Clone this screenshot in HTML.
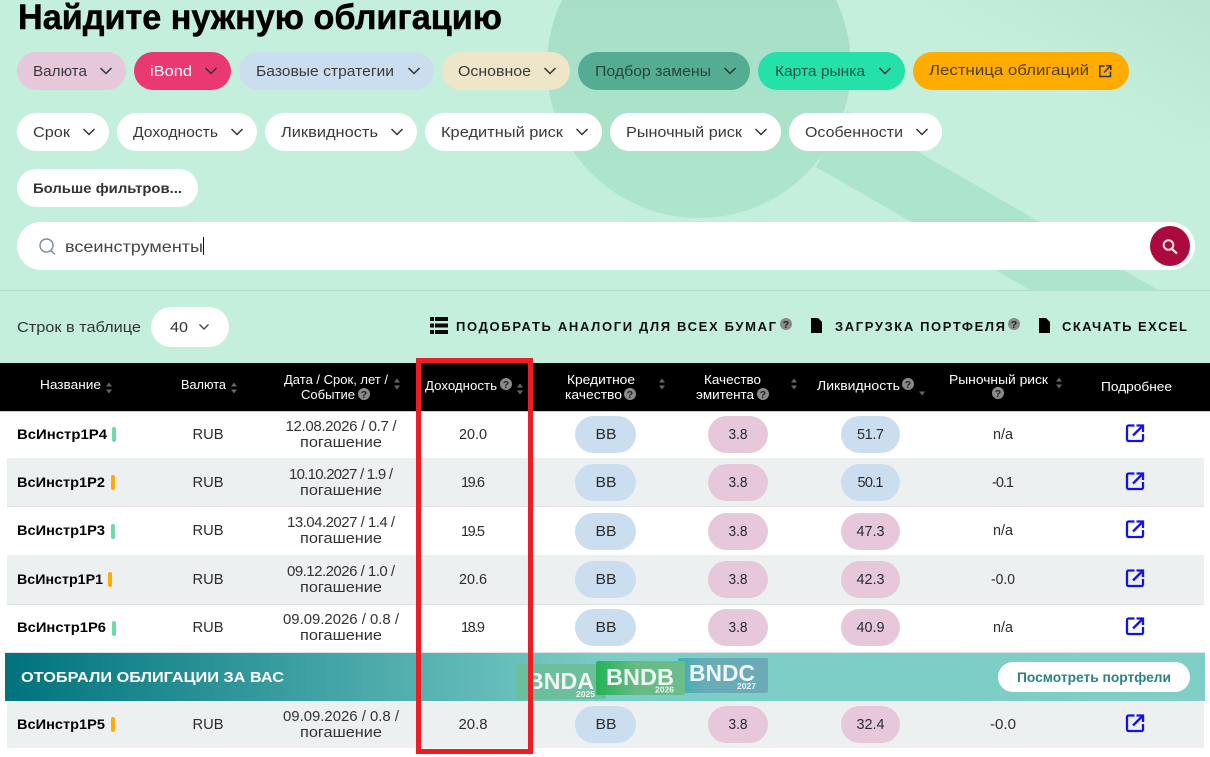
<!DOCTYPE html>
<html lang="ru"><head><meta charset="utf-8"><title>Облигации</title>
<style>
html,body{margin:0;padding:0;background:#fff;width:1210px;height:757px;overflow:hidden}
svg{display:block}
text{font-family:"Liberation Sans","Noto Sans CJK SC",sans-serif;font-size:14.5px;fill:#3a3a3a}
.p{font-size:15px}
.w{fill:#fff;font-size:13px}
.m{text-anchor:middle;font-size:14.5px;fill:#2b2b2b}
.n{font-size:14px;font-weight:bold;fill:#000}
.d{font-size:15px;fill:#333;text-anchor:middle}
.a{font-size:13px;font-weight:bold;fill:#111}
.q{font-size:10.5px;font-weight:bold;fill:#222;text-anchor:middle}
.b{font-weight:bold;fill:#f1f5f3}
</style></head><body>
<svg width="1210" height="757" viewBox="0 0 1210 757" xmlns="http://www.w3.org/2000/svg">
<defs>
<path id="c" d="M-5.5 -3L0 2.5L5.5 -3" fill="none" stroke="#333" stroke-width="1.5"/>
<g id="s"><path d="M-3 -1.5L0 -5.500L3 -1.5Z" fill="#666"/><path d="M-3 1.5L0 5.500L3 1.5Z" fill="#666"/></g>
<g id="h"><circle r="6" fill="#8a8a8a"/></g>
<path id="e" d="M8.5 1.5H2.5a1.500 1.500 0 0 0-1.500 1.500V15.500a1.500 1.500 0 0 0 1.500 1.500H15.500a1.500 1.500 0 0 0 1.500-1.500V10M7 11.500L16.500 2M10.500 1.500H17V8" fill="none" stroke="#1212f0" stroke-width="2.300"/>
<path id="f" d="M0 0H7L11 4V15H0Z" fill="#000"/>
<linearGradient id="bn" x1="0" x2="1"><stop offset="0" stop-color="#00737e"/><stop offset=".5" stop-color="#7bcdc6"/><stop offset="1" stop-color="#7fcfc8"/></linearGradient>
<linearGradient id="tr" gradientUnits="userSpaceOnUse" x1="1210" y1="0" x2="1140" y2="130"><stop offset="0" stop-color="#b9e5d2"/><stop offset="1" stop-color="#c3efdc"/></linearGradient>
<linearGradient id="top" x1="0" x2="0" y1="0" y2="1"><stop offset="0" stop-color="#a5dcc5"/><stop offset="1" stop-color="#aee5cd"/></linearGradient>
<linearGradient id="bb" x1="0" x2="1"><stop offset="0" stop-color="#25b258"/><stop offset=".45" stop-color="#65bb84"/><stop offset="1" stop-color="#6cbd8c"/></linearGradient>
<linearGradient id="bc" x1="0" x2="1"><stop offset="0" stop-color="#3eaeb2"/><stop offset=".3" stop-color="#69acb9"/><stop offset="1" stop-color="#6caab7"/></linearGradient>
</defs>

<rect width="1210" height="363" fill="#c3efdc"/>
<rect width="1210" height="150" fill="url(#tr)"/>
<circle cx="699" cy="66" r="152" fill="url(#top)"/>
<path d="M816 167L1030 290H1158L847 111Z" fill="#ade5cc"/>
<rect y="290" width="1210" height="1" fill="#b3dfca"/>

<text x="18" y="29" textLength="484" lengthAdjust="spacingAndGlyphs" stroke="#000" stroke-width=".5" style="font-size:35px;font-weight:bold;fill:#000">Найдите нужную облигацию</text>

<rect x="17" y="52" width="109" height="38" rx="19" fill="#e7c8da"/>
<text class="p" x="33" y="76" textLength="54" lengthAdjust="spacingAndGlyphs">Валюта</text><use href="#c" x="106" y="71"/>
<rect x="134" y="52" width="97" height="38" rx="19" fill="#ea3872"/>
<text class="p" x="150" y="76" textLength="42" lengthAdjust="spacingAndGlyphs" style="fill:#fff">iBond</text><use href="#c" x="211" y="71"/>
<rect x="239" y="52" width="195" height="38" rx="19" fill="#cbdef0"/>
<text class="p" x="256" y="76" textLength="138" lengthAdjust="spacingAndGlyphs">Базовые стратегии</text><use href="#c" x="414" y="71"/>
<rect x="442" y="52" width="128" height="38" rx="19" fill="#efe5c9"/>
<text class="p" x="458" y="76" textLength="73" lengthAdjust="spacingAndGlyphs">Основное</text><use href="#c" x="550" y="71"/>
<rect x="578" y="52" width="172" height="38" rx="19" fill="#54ac93"/>
<text class="p" x="595" y="76" textLength="116" lengthAdjust="spacingAndGlyphs" style="fill:#28453c">Подбор замены</text><use href="#c" x="730" y="71"/>
<rect x="758" y="52" width="147" height="38" rx="19" fill="#24e0a9"/>
<text class="p" x="775" y="76" textLength="90" lengthAdjust="spacingAndGlyphs" style="fill:#1d5548">Карта рынка</text><use href="#c" x="885" y="71"/>
<rect x="913" y="52" width="216" height="38" rx="19" fill="#ffab00"/>
<text class="p" x="929" y="75" textLength="160" lengthAdjust="spacingAndGlyphs" style="fill:#4f3f10">Лестница облигаций</text>
<path d="M1104.500 66H1099.800V76.500H1110.500V71.500M1104 72.500L1110 66.500M1106 65.800H1110.800V70" fill="none" stroke="#333" stroke-width="1.500"/>

<rect x="17" y="113" width="92" height="38" rx="19" fill="#fff"/>
<text class="p" x="33" y="137" textLength="37" lengthAdjust="spacingAndGlyphs">Срок</text><use href="#c" x="89" y="132"/>
<rect x="117" y="113" width="140" height="38" rx="19" fill="#fff"/>
<text class="p" x="133" y="137" textLength="85" lengthAdjust="spacingAndGlyphs">Доходность</text><use href="#c" x="237" y="132"/>
<rect x="265" y="113" width="152" height="38" rx="19" fill="#fff"/>
<text class="p" x="281" y="137" textLength="97" lengthAdjust="spacingAndGlyphs">Ликвидность</text><use href="#c" x="397" y="132"/>
<rect x="425" y="113" width="177" height="38" rx="19" fill="#fff"/>
<text class="p" x="441" y="137" textLength="122" lengthAdjust="spacingAndGlyphs">Кредитный риск</text><use href="#c" x="582" y="132"/>
<rect x="610" y="113" width="171" height="38" rx="19" fill="#fff"/>
<text class="p" x="626" y="137" textLength="116" lengthAdjust="spacingAndGlyphs">Рыночный риск</text><use href="#c" x="761" y="132"/>
<rect x="789" y="113" width="153" height="38" rx="19" fill="#fff"/>
<text class="p" x="805" y="137" textLength="98" lengthAdjust="spacingAndGlyphs">Особенности</text><use href="#c" x="922" y="132"/>
<rect x="17" y="169" width="181" height="38" rx="19" fill="#fff"/>
<text x="33" y="193" textLength="149" lengthAdjust="spacingAndGlyphs" style="font-weight:bold;font-size:14px;fill:#333">Больше фильтров...</text>

<rect x="17" y="222" width="1178" height="48" rx="24" fill="#fff"/>
<circle cx="46.500" cy="245.500" r="6.500" fill="none" stroke="#7e8a92" stroke-width="1.400"/>
<path d="M51 250.500L55 254.500" stroke="#7e8a92" stroke-width="1.400"/>
<text x="65" y="252" textLength="138" lengthAdjust="spacingAndGlyphs" style="font-size:16px;fill:#444">всеинструменты</text>
<rect x="203" y="237" width="1" height="18" fill="#111"/>
<circle cx="1170" cy="246" r="20" fill="#ac0a3f"/>
<circle cx="1168.500" cy="245" r="4.800" fill="none" stroke="#f5e0e6" stroke-width="2"/>
<path d="M1172 249L1177 253.500" stroke="#f5e0e6" stroke-width="2.200"/>

<text x="17" y="332" textLength="124" lengthAdjust="spacingAndGlyphs" style="font-size:15px;fill:#333">Строк в таблице</text>
<rect x="151" y="307" width="78" height="40" rx="20" fill="#fff"/>
<text x="170" y="332" textLength="18" lengthAdjust="spacingAndGlyphs" style="font-size:15px;fill:#333">40</text>
<path d="M199.500 324.500L204 329L208.500 324.500" fill="none" stroke="#444" stroke-width="1.400"/>

<path d="M430 317h4v4h-4zM435 317h13v4h-13zM430 323.500h4v4h-4zM435 323.500h13v4h-13zM430 330h4v4h-4zM435 330h13v4h-13z" fill="#0a0a0a"/>
<text class="a" x="456" y="331" textLength="320">ПОДОБРАТЬ АНАЛОГИ ДЛЯ ВСЕХ БУМАГ</text>
<use href="#h" x="786" y="324"/><text class="q" x="786" y="327.800">?</text>
<use href="#f" x="811" y="318"/>
<text class="a" x="835" y="331" textLength="170">ЗАГРУЗКА ПОРТФЕЛЯ</text>
<use href="#h" x="1014" y="324"/><text class="q" x="1014" y="327.800">?</text>
<use href="#f" x="1039" y="318"/>
<text class="a" x="1062" y="331" textLength="125">СКАЧАТЬ EXCEL</text>

<rect y="363" width="1210" height="48" fill="#000"/>
<text class="w" x="40" y="389" textLength="61" lengthAdjust="spacingAndGlyphs">Название</text><use href="#s" x="109" y="388"/>
<text class="w" x="181" y="389" textLength="45" lengthAdjust="spacingAndGlyphs">Валюта</text><use href="#s" x="234" y="388"/>
<text class="w" x="284" y="384" textLength="104" lengthAdjust="spacingAndGlyphs">Дата / Срок, лет /</text>
<text class="w" x="301" y="399" textLength="54" lengthAdjust="spacingAndGlyphs">Событие</text><use href="#h" x="364" y="394"/><text class="q" x="364" y="397.800">?</text><use href="#s" x="397" y="384"/>
<text class="w" x="425" y="390" textLength="72" lengthAdjust="spacingAndGlyphs">Доходность</text><use href="#h" x="506" y="384"/><text class="q" x="506" y="387.800">?</text><use href="#s" x="520" y="389"/>
<text class="w" x="567" y="384" textLength="68" lengthAdjust="spacingAndGlyphs">Кредитное</text>
<text class="w" x="565" y="399" textLength="57" lengthAdjust="spacingAndGlyphs">качество</text><use href="#h" x="630" y="394"/><text class="q" x="630" y="397.800">?</text><use href="#s" x="662" y="384"/>
<text class="w" x="704" y="384" textLength="57" lengthAdjust="spacingAndGlyphs">Качество</text>
<text class="w" x="696" y="399" textLength="58" lengthAdjust="spacingAndGlyphs">эмитента</text><use href="#h" x="763" y="394"/><text class="q" x="763" y="397.800">?</text><use href="#s" x="794" y="384"/>
<text class="w" x="817" y="390" textLength="83" lengthAdjust="spacingAndGlyphs">Ликвидность</text><use href="#h" x="908" y="384"/><text class="q" x="908" y="387.800">?</text>
<path d="M919 391.500L922 395.500L925 391.500Z" fill="#666"/>
<text class="w" x="949" y="384" textLength="99" lengthAdjust="spacingAndGlyphs">Рыночный риск</text><use href="#s" x="1059" y="383"/>
<use href="#h" x="998" y="393"/><text class="q" x="998" y="396.800">?</text>
<text class="w" x="1101" y="391" textLength="71" lengthAdjust="spacingAndGlyphs">Подробнее</text>

<rect y="411" width="1210" height="346" fill="#fff"/>
<rect y="411" width="1210" height="1" fill="#ccc"/>
<rect x="7" y="458" width="1197" height="48" fill="#edf0f1"/><rect x="7" y="506" width="1197" height="1" fill="#dfe3e4"/>
<rect x="7" y="555" width="1197" height="49" fill="#edf0f1"/><rect x="7" y="604" width="1197" height="1" fill="#dfe3e4"/>
<rect x="5" y="652" width="1200" height="1" fill="#dfe3e4"/>
<rect x="7" y="701" width="1197" height="47" fill="#edf0f1"/>

<!-- row 1 -->
<text class="n" x="17" y="439" textLength="90" lengthAdjust="spacingAndGlyphs">ВсИнстр1Р4</text><rect x="112" y="427" width="4" height="15" rx="2" fill="#6ddba6"/>
<text class="m" x="208" y="439" textLength="31" lengthAdjust="spacingAndGlyphs">RUB</text>
<text class="d" x="341" y="431" textLength="111">12.08.2026 / 0.7 /</text><text class="d" x="341" y="447" textLength="82" lengthAdjust="spacingAndGlyphs">погашение</text>
<text class="m" x="473" y="439" textLength="28" lengthAdjust="spacingAndGlyphs">20.0</text>
<rect x="575" y="416" width="61" height="37" rx="18.500" fill="#cbdef0"/><text class="m" x="606" y="439" textLength="21" lengthAdjust="spacingAndGlyphs">BB</text>
<rect x="708" y="416" width="60" height="37" rx="18.500" fill="#e7c8da"/><text class="m" x="738" y="439" textLength="19" lengthAdjust="spacingAndGlyphs">3.8</text>
<rect x="841" y="416" width="59" height="37" rx="18.500" fill="#cbdef0"/><text class="m" x="870.500" y="439" textLength="27">51.7</text>
<text class="m" x="1003" y="439" textLength="20" lengthAdjust="spacingAndGlyphs">n/a</text>
<use href="#e" x="1126" y="424"/>

<!-- row 2 -->
<text class="n" x="17" y="487" textLength="88" lengthAdjust="spacingAndGlyphs">ВсИнстр1Р2</text><rect x="111" y="475" width="4" height="15" rx="2" fill="#ffab00"/>
<text class="m" x="208" y="487" textLength="31" lengthAdjust="spacingAndGlyphs">RUB</text>
<text class="d" x="341" y="479" textLength="104">10.10.2027 / 1.9 /</text><text class="d" x="341" y="495" textLength="82" lengthAdjust="spacingAndGlyphs">погашение</text>
<text class="m" x="473" y="487" textLength="24">19.6</text>
<rect x="575" y="464" width="61" height="37" rx="18.500" fill="#cbdef0"/><text class="m" x="606" y="487" textLength="21" lengthAdjust="spacingAndGlyphs">BB</text>
<rect x="708" y="464" width="60" height="37" rx="18.500" fill="#e7c8da"/><text class="m" x="738" y="487" textLength="19" lengthAdjust="spacingAndGlyphs">3.8</text>
<rect x="841" y="464" width="59" height="37" rx="18.500" fill="#cbdef0"/><text class="m" x="870.500" y="487" textLength="26">50.1</text>
<text class="m" x="1003" y="487" textLength="22">-0.1</text>
<use href="#e" x="1126" y="472"/>

<!-- row 3 -->
<text class="n" x="17" y="535" textLength="88" lengthAdjust="spacingAndGlyphs">ВсИнстр1Р3</text><rect x="111" y="524" width="4" height="15" rx="2" fill="#6ddba6"/>
<text class="m" x="208" y="535" textLength="31" lengthAdjust="spacingAndGlyphs">RUB</text>
<text class="d" x="341" y="527" textLength="108">13.04.2027 / 1.4 /</text><text class="d" x="341" y="543" textLength="82" lengthAdjust="spacingAndGlyphs">погашение</text>
<text class="m" x="473" y="536" textLength="24">19.5</text>
<rect x="575" y="513" width="61" height="37" rx="18.500" fill="#cbdef0"/><text class="m" x="606" y="536" textLength="21" lengthAdjust="spacingAndGlyphs">BB</text>
<rect x="708" y="513" width="60" height="37" rx="18.500" fill="#e7c8da"/><text class="m" x="738" y="536" textLength="19" lengthAdjust="spacingAndGlyphs">3.8</text>
<rect x="841" y="513" width="59" height="37" rx="18.500" fill="#e7c8da"/><text class="m" x="870.500" y="536" textLength="28" lengthAdjust="spacingAndGlyphs">47.3</text>
<text class="m" x="1003" y="535" textLength="20" lengthAdjust="spacingAndGlyphs">n/a</text>
<use href="#e" x="1126" y="520"/>

<!-- row 4 -->
<text class="n" x="17" y="584" textLength="86" lengthAdjust="spacingAndGlyphs">ВсИнстр1Р1</text><rect x="108" y="572" width="4" height="15" rx="2" fill="#ffab00"/>
<text class="m" x="208" y="584" textLength="31" lengthAdjust="spacingAndGlyphs">RUB</text>
<text class="d" x="341" y="576" textLength="108">09.12.2026 / 1.0 /</text><text class="d" x="341" y="592" textLength="82" lengthAdjust="spacingAndGlyphs">погашение</text>
<text class="m" x="473" y="584" textLength="28" lengthAdjust="spacingAndGlyphs">20.6</text>
<rect x="575" y="561" width="61" height="37" rx="18.500" fill="#cbdef0"/><text class="m" x="606" y="584" textLength="21" lengthAdjust="spacingAndGlyphs">BB</text>
<rect x="708" y="561" width="60" height="37" rx="18.500" fill="#e7c8da"/><text class="m" x="738" y="584" textLength="19" lengthAdjust="spacingAndGlyphs">3.8</text>
<rect x="841" y="561" width="59" height="37" rx="18.500" fill="#e7c8da"/><text class="m" x="870.500" y="584" textLength="28" lengthAdjust="spacingAndGlyphs">42.3</text>
<text class="m" x="1003" y="584" textLength="24" lengthAdjust="spacingAndGlyphs">-0.0</text>
<use href="#e" x="1126" y="569"/>

<!-- row 5 -->
<text class="n" x="17" y="632" textLength="89" lengthAdjust="spacingAndGlyphs">ВсИнстр1Р6</text><rect x="112" y="621" width="4" height="15" rx="2" fill="#6ddba6"/>
<text class="m" x="208" y="632" textLength="31" lengthAdjust="spacingAndGlyphs">RUB</text>
<text class="d" x="341" y="624" textLength="116" lengthAdjust="spacingAndGlyphs">09.09.2026 / 0.8 /</text><text class="d" x="341" y="640" textLength="82" lengthAdjust="spacingAndGlyphs">погашение</text>
<text class="m" x="473" y="632" textLength="24">18.9</text>
<rect x="575" y="609" width="61" height="37" rx="18.500" fill="#cbdef0"/><text class="m" x="606" y="632" textLength="21" lengthAdjust="spacingAndGlyphs">BB</text>
<rect x="708" y="609" width="60" height="37" rx="18.500" fill="#e7c8da"/><text class="m" x="738" y="632" textLength="19" lengthAdjust="spacingAndGlyphs">3.8</text>
<rect x="841" y="609" width="59" height="37" rx="18.500" fill="#e7c8da"/><text class="m" x="870.500" y="632" textLength="28" lengthAdjust="spacingAndGlyphs">40.9</text>
<text class="m" x="1003" y="632" textLength="20" lengthAdjust="spacingAndGlyphs">n/a</text>
<use href="#e" x="1126" y="617"/>

<!-- banner -->
<rect x="5" y="653" width="1200" height="48" fill="url(#bn)"/>
<text x="21" y="682" textLength="263" lengthAdjust="spacingAndGlyphs" style="font-size:14.500px;font-weight:bold;fill:#fff">ОТОБРАЛИ ОБЛИГАЦИИ ЗА ВАС</text>
<rect x="516" y="664" width="90" height="35" rx="2" fill="#6bbf9c"/>
<text class="b" x="527" y="689" textLength="67" lengthAdjust="spacingAndGlyphs" style="font-size:23px">BNDA</text>
<text class="b" x="576" y="697" textLength="19" lengthAdjust="spacingAndGlyphs" style="font-size:8px">2025</text>
<rect x="678" y="658" width="90" height="35" rx="2" fill="url(#bc)"/>
<text class="b" x="689" y="681" textLength="66" lengthAdjust="spacingAndGlyphs" style="font-size:23px">BNDC</text>
<text class="b" x="737" y="689" textLength="19" lengthAdjust="spacingAndGlyphs" style="font-size:8px">2027</text>
<rect x="596" y="661" width="89" height="34" rx="2" fill="url(#bb)"/>
<text class="b" x="606" y="685" textLength="68" lengthAdjust="spacingAndGlyphs" style="font-size:23px">BNDB</text>
<text class="b" x="655" y="692.500" textLength="19" lengthAdjust="spacingAndGlyphs" style="font-size:8px">2026</text>
<rect x="998" y="662" width="192" height="30" rx="15" fill="#fff"/>
<text x="1017" y="682" textLength="154" lengthAdjust="spacingAndGlyphs" style="font-size:13.500px;font-weight:bold;fill:#2a8288">Посмотреть портфели</text>

<!-- row 6 -->
<text class="n" x="17" y="729" textLength="88" lengthAdjust="spacingAndGlyphs">ВсИнстр1Р5</text><rect x="111" y="717" width="4" height="15" rx="2" fill="#ffab00"/>
<text class="m" x="208" y="729" textLength="31" lengthAdjust="spacingAndGlyphs">RUB</text>
<text class="d" x="341" y="721" textLength="116" lengthAdjust="spacingAndGlyphs">09.09.2026 / 0.8 /</text><text class="d" x="341" y="737" textLength="82" lengthAdjust="spacingAndGlyphs">погашение</text>
<text class="m" x="473" y="729" textLength="29" lengthAdjust="spacingAndGlyphs">20.8</text>
<rect x="575" y="706" width="61" height="37" rx="18.500" fill="#cbdef0"/><text class="m" x="606" y="729" textLength="21" lengthAdjust="spacingAndGlyphs">BB</text>
<rect x="708" y="706" width="60" height="37" rx="18.500" fill="#e7c8da"/><text class="m" x="738" y="729" textLength="19" lengthAdjust="spacingAndGlyphs">3.8</text>
<rect x="841" y="706" width="59" height="37" rx="18.500" fill="#e7c8da"/><text class="m" x="870.500" y="729" textLength="28" lengthAdjust="spacingAndGlyphs">32.4</text>
<text class="m" x="1003" y="729" textLength="26" lengthAdjust="spacingAndGlyphs">-0.0</text>
<use href="#e" x="1126" y="714"/>

<!-- red annotation -->
<rect x="418.500" y="360.500" width="112" height="391" fill="none" stroke="#ee1c25" stroke-width="5"/>
</svg>
</body></html>
